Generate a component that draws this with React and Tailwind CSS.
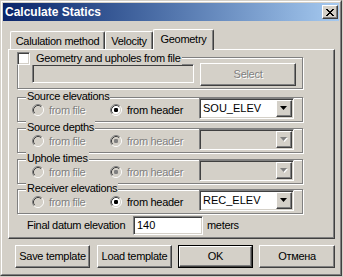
import React from 'react';

const raised =
  'border border-t-white border-l-white border-r-[#404040] border-b-[#404040] shadow-[inset_-1px_-1px_0_#808080] bg-[#d4d0c8]';
const sunken =
  'border border-t-[#808080] border-l-[#808080] border-r-white border-b-white shadow-[inset_1px_1px_0_#404040,inset_-1px_-1px_0_#d4d0c8]';
const grayText = 'text-[#808080] [text-shadow:1px_1px_0_#fff]';

function Radio({ checked, disabled }) {
  const fill = disabled ? '#d4d0c8' : '#fff';
  const dot = disabled ? '#808080' : '#000';
  return (
    <svg width="12" height="12" viewBox="0 0 12 12" className="shrink-0">
      <circle cx="6" cy="6" r="4.5" fill={fill} />
      <path d="M2.11 9.89 A5.5 5.5 0 0 1 9.89 2.11" fill="none" stroke="#808080" />
      <path d="M9.89 2.11 A5.5 5.5 0 0 1 2.11 9.89" fill="none" stroke="#fff" />
      <path d="M2.82 9.18 A4.5 4.5 0 0 1 9.18 2.82" fill="none" stroke="#404040" />
      <path d="M9.18 2.82 A4.5 4.5 0 0 1 2.82 9.18" fill="none" stroke="#d4d0c8" />
      {checked && <rect x="4" y="4" width="4" height="4" rx="1.2" fill={dot} />}
    </svg>
  );
}

function Arrow({ disabled }) {
  return (
    <svg width="8" height="5" viewBox="0 0 8 5">
      {disabled && <polygon points="1,1 8,1 4.5,5" fill="#fff" />}
      <polygon points="0,0 7,0 3.5,4" fill={disabled ? '#808080' : '#000'} />
    </svg>
  );
}

function Combo({ value, disabled }) {
  return (
    <div className={`w-[95px] h-[21px] p-[1px] flex ${sunken} ${disabled ? 'bg-[#d4d0c8]' : 'bg-white'}`}>
      <div className="flex-1 pl-[2px] text-[11px] leading-[17px] tracking-normal">{value}</div>
      <div className={`w-[16px] h-[17px] flex items-center justify-center ${raised}`}>
        <Arrow disabled={disabled} />
      </div>
    </div>
  );
}

function Group({ label, className, children }) {
  return (
    <div className={`relative w-[286px] h-[25px] border border-[#808080] shadow-[inset_1px_1px_0_#fff,1px_1px_0_#fff] ${className}`}>
      <div className="absolute left-[8px] -top-[8px] bg-[#d4d0c8] px-[1px] leading-[13px]">{label}</div>
      {children}
    </div>
  );
}

function SourceRow({ label, className, value, headerOn, disabled }) {
  return (
    <Group label={label} className={className}>
      <div className="flex items-start pl-[14px]">
        <div className={`w-[78px] h-[12px] mt-[6px] flex items-center gap-[5px] ${grayText}`}>
          <Radio disabled />
          <span>from file</span>
        </div>
        <div className={`w-[89px] h-[12px] mt-[6px] flex items-center gap-[5px] ${disabled ? grayText : ''}`}>
          <Radio checked={headerOn} disabled={disabled} />
          <span>from header</span>
        </div>
        <Combo value={value} disabled={disabled} />
      </div>
    </Group>
  );
}

function Button({ children, className, def }) {
  if (def) {
    return (
      <div className={`h-[23px] border border-black ${className}`}>
        <div className={`h-full flex items-center justify-center ${raised}`}>{children}</div>
      </div>
    );
  }
  return <div className={`h-[23px] flex items-center justify-center ${raised} ${className}`}>{children}</div>;
}

function CloseIcon() {
  return (
    <svg width="8" height="7" viewBox="0 0 8 7" shapeRendering="crispEdges">
      <path
        d="M0 0h2v1H0zM6 0h2v1H6zM1 1h2v1H1zM5 1h2v1H5zM2 2h4v1H2zM3 3h2v1H3zM2 4h4v1H2zM1 5h2v1H1zM5 5h2v1H5zM0 6h2v1H0zM6 6h2v1H6z"
        fill="#000"
      />
    </svg>
  );
}

export default function App() {
  return (
    <div className="w-[343px] h-[277px] bg-[#d4d0c8] font-['Liberation_Sans',Arial,sans-serif] text-[11px] leading-[13px] tracking-[-0.3px] text-black">
      <div className="w-[342px] h-[276px] border border-t-[#d4d0c8] border-l-[#d4d0c8] border-r-[#404040] border-b-[#404040]">
        <div className="h-full border border-t-white border-l-white border-r-[#808080] border-b-[#808080] p-[1px]">
          {/* title bar */}
          <div className="h-[18px] flex items-center bg-gradient-to-r from-[#0a246a] to-[#a6caf0] pl-[2px] pr-[1px]">
            <span className="flex-1 text-white font-bold text-[12px] tracking-normal">Calculate Statics</span>
            <div className={`w-[16px] h-[14px] flex items-center justify-center ${raised}`}>
              <CloseIcon />
            </div>
          </div>

          {/* tabs */}
          <div className="ml-[5px] mt-[8px] w-[327px]">
            <div className="flex items-end h-[20px] pl-[2px]">
              <div className="w-[95px] h-[18px] flex items-center justify-center pt-[2px] rounded-t-[2px] border-t border-l border-r border-t-white border-l-white border-r-[#404040] shadow-[inset_-1px_0_0_#808080]">
                Calulation method
              </div>
              <div className="w-[48px] h-[18px] flex items-center justify-center pt-[2px] rounded-t-[2px] border-t border-l border-r border-t-white border-l-white border-r-[#404040] shadow-[inset_-1px_0_0_#808080]">
                Velocity
              </div>
              <div className="relative z-10 w-[61px] h-[21px] -mb-[1px] bg-[#d4d0c8] flex items-start justify-center pt-[3px] rounded-t-[2px] border-t border-l border-r border-t-white border-l-white border-r-[#404040] shadow-[inset_-1px_0_0_#808080]">
                Geometry
              </div>
            </div>

            {/* panel */}
            <div className="h-[190px] border border-t-white border-l-white border-r-[#404040] border-b-[#404040] shadow-[inset_-1px_-1px_0_#808080] pl-[8px] pt-[7px]">
              {/* file group */}
              <div className="relative w-[286px] h-[32px] border border-[#808080] shadow-[inset_1px_1px_0_#fff,1px_1px_0_#fff]">
                <div className="absolute -left-[1px] -top-[6px] h-[13px] flex items-center bg-[#d4d0c8] pr-[2px]">
                  <div className={`w-[13px] h-[13px] bg-white ${sunken.replace('inset_-1px_-1px_0_#d4d0c8', 'inset_-1px_-1px_0_#d4d0c8')}`} />
                  <span className="ml-[6px]">Geometry and upholes from file</span>
                </div>
                <div className="flex items-start pl-[14px] pt-[6px]">
                  <div className={`w-[162px] h-[19px] bg-[#d4d0c8] ${sunken}`} />
                  <Button className={`w-[96px] h-[20px] ml-[6px] -mt-[1px] ${grayText}`}>Select</Button>
                </div>
              </div>

              <SourceRow label="Source elevations" className="mt-[8px]" value="SOU_ELEV" headerOn />
              <SourceRow label="Source depths" className="mt-[6px]" headerOn disabled />
              <SourceRow label="Uphole times" className="mt-[6px]" headerOn disabled />
              <SourceRow label="Receiver elevations" className="mt-[5px]" value="REC_ELEV" headerOn />

              <div className="flex items-center mt-[2px] ml-[10px]">
                <span className="w-[106px]">Final datum elevation</span>
                <div className={`w-[70px] h-[19px] bg-white pl-[3px] leading-[17px] tracking-normal ${sunken}`}>140</div>
                <span className="ml-[4px]">meters</span>
              </div>
            </div>
          </div>

          {/* buttons */}
          <div className="flex mt-[6px] ml-[12px]">
            <Button className="w-[75px]">Save template</Button>
            <Button className="w-[75px] ml-[7px]">Load template</Button>
            <Button className="w-[75px] ml-[6px]" def>OK</Button>
            <Button className="w-[76px] ml-[6px]">Отмена</Button>
          </div>
        </div>
      </div>
    </div>
  );
}
